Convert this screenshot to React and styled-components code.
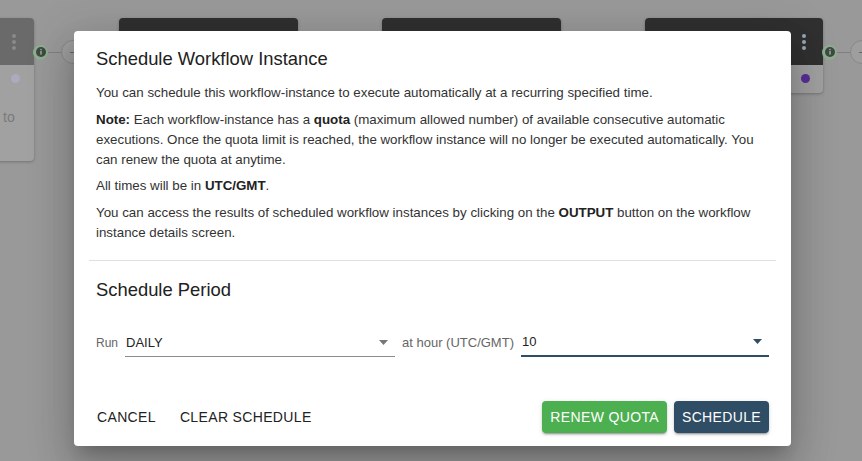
import React from "react";
import styled, { createGlobalStyle } from "styled-components";

const GlobalStyle = createGlobalStyle`
  html, body { margin: 0; padding: 0; }
  body {
    background: #999999;
    font-family: "Liberation Sans", Arial, sans-serif;
    -webkit-font-smoothing: antialiased;
  }
  * { box-sizing: border-box; }
`;

const Canvas = styled.div`
  position: relative;
  width: 862px;
  height: 461px;
  overflow: hidden;
  background: #999999;
`;

const Node = styled.div`
  position: absolute;
  left: ${(p) => p.$x}px;
  top: ${(p) => p.$y}px;
  width: ${(p) => p.$w}px;
  height: ${(p) => p.$h}px;
  display: flex;
  flex-direction: column;
  border-radius: 4px;
  overflow: hidden;
  background: #a1a1a1;
  box-shadow: 0 1px 3px rgba(0, 0, 0, 0.25);
`;

const NodeHeader = styled.div`
  height: 47px;
  flex: none;
  background: ${(p) => p.$bg || "#303030"};
  display: flex;
  justify-content: ${(p) => p.$align || "flex-end"};
  align-items: center;
  padding: 0 ${(p) => p.$pad || 0}px;
`;

const NodeBody = styled.div`
  flex: 1;
  position: relative;
`;

const Dots = styled.div`
  display: flex;
  flex-direction: column;
  gap: 2px;
  span {
    width: 4px;
    height: 4px;
    border-radius: 50%;
    background: ${(p) => p.$c};
  }
`;

const Dot = styled.div`
  position: absolute;
  left: ${(p) => p.$x}px;
  top: ${(p) => p.$y}px;
  width: 9px;
  height: 9px;
  border-radius: 50%;
  background: ${(p) => p.$c};
`;

const NodeText = styled.div`
  position: absolute;
  left: ${(p) => p.$x}px;
  top: ${(p) => p.$y}px;
  font-size: 14px;
  color: #7a7a7a;
`;

const Port = styled.div`
  position: absolute;
  left: ${(p) => p.$x}px;
  top: ${(p) => p.$y}px;
  display: flex;
  align-items: center;
`;

const InfoRing = styled.div`
  width: 15px;
  height: 15px;
  border-radius: 50%;
  background: #8fae8f;
  display: flex;
  align-items: center;
  justify-content: center;
`;

const Wire = styled.div`
  width: 13px;
  height: 1px;
  background: #808080;
`;

const Knob = styled.div`
  width: 24px;
  height: 24px;
  border-radius: 50%;
  border: 1px solid #888;
  background: #9e9e9e;
  display: flex;
  align-items: center;
  justify-content: center;
  &::after {
    content: "";
    width: 7px;
    height: 1px;
    background: #666;
  }
`;

const Backdrop = styled.div`
  position: absolute;
  inset: 0;
  display: flex;
  align-items: flex-start;
  padding: 31px 0 0 74px;
`;

const Dialog = styled.div`
  width: 717px;
  height: 415px;
  background: #fff;
  border-radius: 4px;
  display: flex;
  flex-direction: column;
  box-shadow: 0px 11px 15px -7px rgba(0, 0, 0, 0.2),
    0px 24px 38px 3px rgba(0, 0, 0, 0.14),
    0px 9px 46px 8px rgba(0, 0, 0, 0.12);
`;

const Title = styled.h2`
  margin: 0;
  padding: 14px 22px 0;
  font-size: 18.4px;
  line-height: 28px;
  font-weight: 400;
  color: #212121;
`;

const Content = styled.div`
  padding: 10px 22px 0;
`;

const Para = styled.p`
  margin: 0 0 6.5px;
  font-size: 13.33px;
  line-height: 20px;
  color: #333;
  b { font-weight: 700; color: #222; }
`;

const Divider = styled.hr`
  margin: 11px 15px 0;
  border: none;
  height: 1px;
  background: #e0e0e0;
`;

const Section = styled.div`
  padding: 0 22px;
`;

const SubTitle = styled.h3`
  margin: 15px 0 0;
  font-size: 18.4px;
  line-height: 28px;
  font-weight: 400;
  color: #212121;
`;

const Row = styled.div`
  margin-top: 24px;
  display: flex;
  align-items: flex-end;
  gap: 7px;
`;

const Label = styled.span`
  font-size: ${(p) => p.$size || 13}px;
  line-height: 20px;
  color: #666;
  padding-bottom: 4px;
`;

const Select = styled.div`
  width: ${(p) => p.$w}px;
  height: 29px;
  display: flex;
  align-items: center;
  justify-content: space-between;
  padding: 0 7px 0 1px;
  border-bottom: ${(p) => (p.$focus ? "2px solid #2e4d66" : "1px solid #8c8c8c")};
  font-size: 13px;
  color: #222;
  svg { flex: none; }
`;

const Actions = styled.div`
  margin-top: auto;
  padding: 0 22px 13px 15px;
  display: flex;
  align-items: center;
  gap: 8px;
`;

const Spacer = styled.div`
  flex: 1;
`;

const Button = styled.button`
  height: 32px;
  padding: 0 8px;
  margin-left: ${(p) => p.$ml || 0}px;
  border: none;
  border-radius: 4px;
  font-family: inherit;
  font-size: 14px;
  letter-spacing: 0.35px;
  text-transform: uppercase;
  cursor: pointer;
  background: ${(p) => p.$bg || "transparent"};
  color: ${(p) => (p.$bg ? "#fff" : "#222")};
  box-shadow: ${(p) =>
    p.$bg
      ? "0px 3px 1px -2px rgba(0,0,0,0.2), 0px 2px 2px 0px rgba(0,0,0,0.14), 0px 1px 5px 0px rgba(0,0,0,0.12)"
      : "none"};
`;

const Arrow = ({ color }) => (
  <svg width="9" height="5" viewBox="0 0 9 5">
    <path d="M0 0 L9 0 L4.5 5 Z" fill={color} />
  </svg>
);

const InfoIcon = () => (
  <svg width="10" height="10" viewBox="0 0 10 10">
    <circle cx="5" cy="5" r="5" fill="#3f4a44" />
    <rect x="4.3" y="4" width="1.4" height="3.6" fill="#9fb59f" />
    <circle cx="5" cy="2.6" r="0.8" fill="#9fb59f" />
  </svg>
);

export default function App() {
  return (
    <Canvas>
      <GlobalStyle />
      <Node $x={-150} $y={18} $w={184} $h={143}>
        <NodeHeader $bg="#6a6a6a" $align="flex-end" $pad={18}>
          <Dots $c="#8a8a8a"><span /><span /><span /></Dots>
        </NodeHeader>
        <NodeBody>
          <Dot $x={161} $y={9} $c="#acaabb" />
          <NodeText $x={153} $y={44}>to</NodeText>
        </NodeBody>
      </Node>
      <Port $x={33} $y={40}>
        <InfoRing><InfoIcon /></InfoRing>
        <Wire />
        <Knob />
      </Port>

      <Node $x={119} $y={18} $w={179} $h={120}>
        <NodeHeader />
      </Node>
      <Node $x={382} $y={18} $w={179} $h={120}>
        <NodeHeader />
      </Node>

      <Node $x={645} $y={18} $w={178} $h={75}>
        <NodeHeader $pad={17}>
          <Dots $c="#9aa8b4"><span /><span /><span /></Dots>
        </NodeHeader>
        <NodeBody>
          <Dot $x={156} $y={9} $c="#5a2e96" />
        </NodeBody>
      </Node>
      <Port $x={822} $y={40}>
        <InfoRing><InfoIcon /></InfoRing>
        <Wire />
        <Knob />
      </Port>

      <Backdrop>
        <Dialog>
          <Title>Schedule Workflow Instance</Title>
          <Content>
            <Para>
              You can schedule this workflow-instance to execute automatically at a recurring specified time.
            </Para>
            <Para>
              <b>Note:</b> Each workflow-instance has a <b>quota</b> (maximum allowed number) of available
              consecutive automatic executions. Once the quota limit is reached, the workflow instance will no
              longer be executed automatically. You can renew the quota at anytime.
            </Para>
            <Para>
              All times will be in <b>UTC/GMT</b>.
            </Para>
            <Para>
              You can access the results of scheduled workflow instances by clicking on the <b>OUTPUT</b> button on
              the workflow instance details screen.
            </Para>
          </Content>
          <Divider />
          <Section>
            <SubTitle>Schedule Period</SubTitle>
            <Row>
              <Label $size={12}>Run</Label>
              <Select $w={270}>
                <span>DAILY</span>
                <Arrow color="#777" />
              </Select>
              <Label>at hour (UTC/GMT)</Label>
              <Select $w={248} $focus>
                <span>10</span>
                <Arrow color="#2e4d66" />
              </Select>
            </Row>
          </Section>
          <Actions>
            <Button>Cancel</Button>
            <Button>Clear Schedule</Button>
            <Spacer />
            <Button $bg="#4caf50">Renew Quota</Button>
            <Button $bg="#2f4d65" $ml={-1}>Schedule</Button>
          </Actions>
        </Dialog>
      </Backdrop>
    </Canvas>
  );
}
